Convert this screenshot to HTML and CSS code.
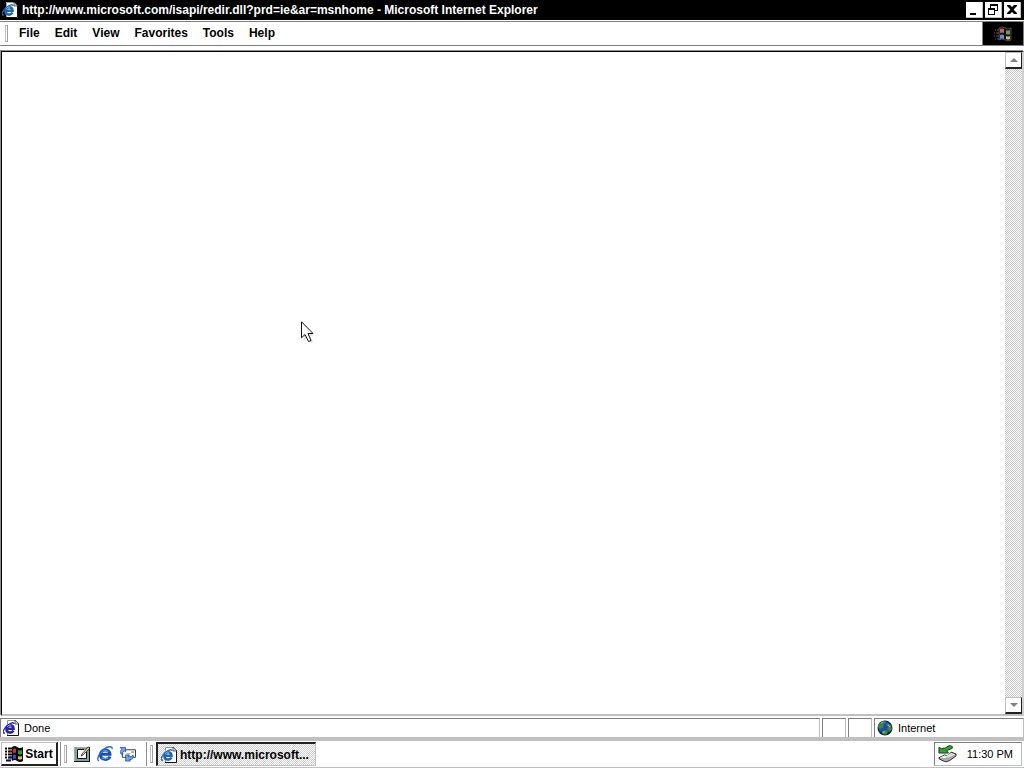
FILE: index.html
```html
<!DOCTYPE html>
<html lang="en">
<head>
<meta charset="utf-8">
<title>Microsoft Internet Explorer</title>
<link rel="stylesheet" href="styles.css">
</head>
<body>
<svg class="defs" aria-hidden="true">
  <symbol id="page" viewBox="0 0 16 16">
    <path d="M4 0h8l4 4v12H4z" fill="#fff"/>
    <path d="M4.500 4V.5h7.500M4.500 13v2.500" fill="none" stroke="#999"/>
    <path d="M4 15.500h11.500V4" fill="none" stroke="#111"/>
    <path d="M12 0v4h4z" fill="#ddd" stroke="#222" stroke-width=".7"/>
    <path d="M10.500 10.500C9 13.500 3.500 13.500 3.500 9c0-5 7-5 7-.3H4" fill="none" stroke="currentColor" stroke-width="2.600"/>
    <path d="M2 13C-2 14 1 8 5 5c3-2.500 6-3 6-1" fill="none" stroke="currentColor" stroke-width="1.300"/>
    <path d="M4 7l2-2 2 .3" fill="none" stroke="#64bfe9"/>
  </symbol>
  <symbol id="windows" viewBox="0 0 18 16">
    <path d="M7 1q3-2 5 0 3 2 6 0v14q-3 2-6 0-2-2-5 0z" fill="#080808"/>
    <path d="M8 3q2-1 3 0v4q-1-1-3 0z" fill="#c13b32"/>
    <path d="M13 4q2 1 4 0v4q-2 1-4 0z" fill="#2c9948"/>
    <path d="M8 9q2-1 3 0v4q-1-1-3 0z" fill="#2852c8"/>
    <path d="M13 10q2 1 4 0v3q-2 1-4 0z" fill="#dfc238"/>
    <path d="M0 2.500h2M3 2.500h4M0 5.500h2M3 5.500h4M0 8.500h2M3 8.500h4M0 11.500h2M3 11.500h4M1 14.500h5" stroke="#111" stroke-width="2"/>
    <path d="M4 4.500h3M3 7h4" stroke="#b33"/>
    <path d="M4 10.500h3M3 13h4" stroke="#34b"/>
  </symbol>
</svg>
<div class="desktop">
  <header class="titlebar">
    <svg class="icon sky"><use href="#page"/></svg>
    <h1 class="title">http://www.microsoft.com/isapi/redir.dll?prd=ie&amp;ar=msnhome - Microsoft Internet Explorer</h1>
    <div class="controls">
      <button class="control" aria-label="Minimize"><svg viewBox="0 0 16 15"><path d="M4 11h6v2H4z"/></svg></button>
      <button class="control" aria-label="Restore"><svg viewBox="0 0 16 15"><path d="M5 2h8v7h-3V8h2V4H6v2H5zM3 6h7v7H3zm1 2v4h5V8z" fill-rule="evenodd"/></svg></button>
      <button class="control" aria-label="Close"><svg viewBox="0 0 16 15"><path d="M3 3h3l2 2 2-2h3v1L9.500 7.500 13 11v1h-3L8 10l-2 2H3v-1l3.500-3.500L3 4z"/></svg></button>
    </div>
  </header>
  <nav class="menubar">
    <span class="grip"></span>
    <div class="menus">
      <button class="menu">File</button>
      <button class="menu">Edit</button>
      <button class="menu">View</button>
      <button class="menu">Favorites</button>
      <button class="menu">Tools</button>
      <button class="menu">Help</button>
    </div>
    <div class="brand">
      <svg viewBox="0 0 20 16" aria-hidden="true">
        <path d="M6 2q3-2 6 0 3 2 6 0v12q-3 2-6 0-3-2-6 0z" fill="#111" stroke="#777" stroke-width=".6"/>
        <path d="M7 3q2-1 4 0v4q-2-1-4 0z" fill="#c8674f"/>
        <path d="M13 4q2 1 4 0v4q-2 1-4 0z" fill="#6c9a60"/>
        <path d="M7 9q2-1 4 0v4q-2-1-4 0z" fill="#5e8ed0"/>
        <path d="M13 10q2 1 4 0v3q-2 1-4 0z" fill="#d2bd62"/>
        <path d="M2 4h1m1 0h2M1 7h1m1 0h3" stroke="#8a4550"/>
        <path d="M1 10h1m1 0h3M2 13h1m1 0h2" stroke="#4a5590"/>
      </svg>
    </div>
  </nav>
  <div class="view">
    <main class="document"></main>
    <div class="scrollbar">
      <button class="scroll" aria-label="Scroll up"><svg viewBox="0 0 8 4"><path d="M0 4h8L4 0z"/></svg></button>
      <button class="scroll" aria-label="Scroll down"><svg viewBox="0 0 8 4"><path d="M0 0h8L4 4z"/></svg></button>
    </div>
  </div>
  <footer class="status">
    <div class="pane message"><svg class="icon indigo"><use href="#page"/></svg><span>Done</span></div>
    <div class="pane small"></div>
    <div class="pane small"></div>
    <div class="pane zone">
      <svg class="icon" viewBox="0 0 16 16">
        <circle cx="8" cy="8" r="7.500" fill="#101f4d"/>
        <circle cx="7" cy="7" r="6" fill="#2048a8"/>
        <path d="M2 4l4-3 3 1-2 2-1 4-3 1-2-2zM10 3l4 2 1 4-3 3-2-3 1-2-2-2zM5 11l4-1 2 2-2 3-4-1z" fill="#398746"/>
        <path d="M4 3l2-1M11 5l2 2M6 12h2" stroke="#8fd0b0"/>
      </svg>
      <span>Internet</span>
    </div>
  </footer>
  <div class="taskbar">
    <button class="start"><svg viewBox="0 0 18 16"><use href="#windows"/></svg>Start</button>
    <span class="rule"></span><span class="grip"></span>
    <div class="launch">
      <button class="quick" aria-label="Show desktop"><svg viewBox="0 0 16 16">
        <path d="M0 1h15v14H0z" fill="#7fa69c"/><path d="M0 1.500h15M.5 1v14" stroke="#9aa"/>
        <path d="M0 15.500h16M15.500 1v15" stroke="#111"/><path d="M4 4h8v8H4z" fill="#fff"/>
        <path d="M3.500 12.500v-9H10M3.500 12.500h9V6" fill="none" stroke="#111"/>
        <path d="M7 10l1-2 6-7 2 1-7 7z" fill="#f0d574" stroke="#111" stroke-width=".7"/>
      </svg></button>
      <button class="quick" aria-label="Internet Explorer"><svg viewBox="0 0 16 16">
        <path d="M13 10.500C11 15 3.500 14 3.500 8.500c0-6 9.500-6 9.500-.2H5" fill="none" stroke="#174fba" stroke-width="3"/>
        <path d="M4 7c2-4 6-3 7-1M5 12c2 1 4 1 6 0" fill="none" stroke="#4eafea" stroke-width="1.200"/>
        <path d="M2 15C-1 14 2 7 7 3c4-3 9-3 8 0" fill="none" stroke="#2865ca" stroke-width="1.300"/>
      </svg></button>
      <button class="quick" aria-label="Outlook Express"><svg viewBox="0 0 17 16">
        <path d="M2.500 3.500h14v8h-14z" fill="#fff" stroke="#333"/><path d="M12 5h3v2h-3z" fill="#e09a50"/>
        <path d="M7 7.500h4M7 9.500h3" stroke="#aaa"/>
        <path d="M0 1h6v5L4.500 4.500Q2 6 3 9 0 8 0 5.500L2 3z" fill="#6ba7ee" stroke="#1d4597" stroke-width=".8"/>
        <path d="M6 9l4 0-1 2q3 1 5-2 1 5-4 5l1 1.500H6z" fill="#6ba7ee" stroke="#1d4597" stroke-width=".8"/>
      </svg></button>
    </div>
    <span class="rule"></span><span class="grip"></span>
    <button class="task"><svg class="icon sky"><use href="#page"/></svg><span>http://www.microsoft...</span></button>
    <div class="tray">
      <svg viewBox="0 0 20 18" aria-hidden="true">
        <path d="M1 13l6-3 3 1 4-4 5 2v2l-7 5-3 1H7l-6-3z" fill="#aaa" stroke="#222"/>
        <path d="M8 11l6-3 4 1.500L11 13z" fill="#ddd"/>
        <path d="M2 12.500l5-2 3 1.500-3 1.500z" fill="#f4f4f4"/>
        <path d="M1 2l3 1.500 4-1L12 0l3 1v2L9 5.500 11 8H1z" fill="#2fa52f" stroke="#0f3f12"/>
      </svg>
      <time>11:30 PM</time>
    </div>
  </div>
  <svg class="pointer" viewBox="0 0 14 22" aria-hidden="true">
    <path d="M2 3l11 11-4 1 3 6-3 1-3-5-3 3z" fill="#ccc" opacity=".6"/>
    <path d="M.5.8v16L4 13.500 7.500 20.500 10 19.500 7 12.500h5z" fill="#fff" stroke="#111"/>
  </svg>
</div>
</body>
</html>
```
FILE: styles.css
```css
* { box-sizing: border-box; }
body {
  margin: 0;
  font-family: "Liberation Sans", Arial, sans-serif;
  font-size: 11px;
  line-height: 14px;
  color: #000;
  background: #fff;
}
button {
  margin: 0;
  padding: 0;
  border: 0;
  border-radius: 0;
  background: #fff;
  color: #000;
  font: inherit;
}
svg { display: block; flex: none; }
.defs { position: absolute; width: 0; height: 0; }
.desktop { display: flex; flex-direction: column; height: 100vh; overflow: hidden; }
.icon { width: 16px; height: 16px; }
.sky { color: #2464b4; }
.indigo { color: #2924a4; }

.titlebar {
  display: flex;
  align-items: center;
  height: 20px;
  padding: 0 3px 0 2px;
  gap: 4px;
  background: #000;
  color: #fff;
}
.title { flex: 1; margin: 0; font-size: 12px; font-weight: bold; white-space: nowrap; overflow: hidden; }
.controls { display: flex; gap: 2px; }
.control { width: 17px; height: 16px; border: 1px solid #c0c0c0; border-width: 0 1px 1px 0; }
.control svg { width: 16px; height: 15px; }

.menubar {
  display: flex;
  align-items: stretch;
  height: 25px;
  padding-left: 5px;
  margin-top: 1px;
  border-top: 1px solid #808080;
  border-bottom: 1px solid #808080;
}
.grip { width: 3px; margin: 3px 0; border: 1px solid #a0a0a0; border-left-color: #c0c0c0; }
.menus { display: flex; flex: 1; align-items: center; padding: 0 3px 1px; }
.menu { padding: 0 7px 0 8px; font-size: 12px; font-weight: bold; }
.brand { display: flex; align-items: center; justify-content: center; width: 42px; border: 1px solid #808080; border-width: 0 1px; background: #000; }
.brand svg { width: 20px; height: 16px; }

.view {
  display: flex;
  flex: 1;
  min-height: 0;
  margin: 5px 0 0 1px;
  border-top: 1px solid #000;
  border-left: 1px solid #000;
  border-bottom: 2px solid #c0c0c0;
  border-right: 2px solid #d0d0d0;
  box-shadow: -1px -1px #909090;
}
.document { flex: 1; }
.scrollbar {
  display: flex;
  flex-direction: column;
  justify-content: space-between;
  width: 17px;
  background: repeating-conic-gradient(#c8c8c8 0 25%, #fff 0 50%) 0 0 / 2px 2px;
}
.scroll {
  display: flex;
  align-items: center;
  justify-content: center;
  height: 17px;
  border: 1px solid #c0c0c0;
  border-right-color: #222;
  border-bottom: 2px solid #222;
}
.scroll svg { width: 8px; height: 4px; fill: #808080; }

.status { display: flex; gap: 2px; height: 25px; padding-top: 2px; border-bottom: 4px solid #c0c0c0; }
.pane { display: flex; align-items: center; gap: 5px; border: 1px solid #808080; border-right-color: #c0c0c0; border-bottom: 0; padding-left: 2px; }
.message { flex: 1; }
.small { width: 24px; }
.zone { width: 150px; }

.taskbar { display: flex; align-items: stretch; height: 27px; padding: 1px 2px 1px 1px; border-bottom: 1px solid #c0c0c0; }
.start {
  display: flex;
  align-items: center;
  justify-content: center;
  gap: 2px;
  width: 57px;
  border: 1px solid #c0c0c0;
  border-right: 2px solid #222;
  border-bottom: 2px solid #222;
  font-size: 12px;
  font-weight: bold;
}
.start svg { width: 18px; height: 16px; }
.rule { width: 1px; margin-left: 2px; background: #909090; }
.rule + .grip { margin-left: 3px; }
.launch { display: flex; align-items: center; gap: 7px; padding: 0 8px 0 7px; }
.quick svg { width: 16px; height: 16px; }
.task {
  display: flex;
  align-items: center;
  gap: 3px;
  width: 160px;
  margin-left: 3px;
  padding-left: 3px;
  border: 1px solid #c0c0c0;
  border-top: 2px solid #222;
  border-left: 2px solid #222;
  background: repeating-conic-gradient(#d0d0d0 0 25%, #fff 0 50%) 0 0 / 2px 2px;
  font-size: 12px;
  font-weight: bold;
  white-space: nowrap;
}
.tray {
  display: flex;
  align-items: center;
  gap: 10px;
  margin-left: auto;
  padding: 0 8px 0 3px;
  border: 1px solid #808080;
  border-right-color: #c0c0c0;
  border-bottom-color: #c0c0c0;
}
.tray svg { width: 19px; height: 18px; }
.pointer { position: absolute; left: 301px; top: 321px; width: 14px; height: 22px; }
```
